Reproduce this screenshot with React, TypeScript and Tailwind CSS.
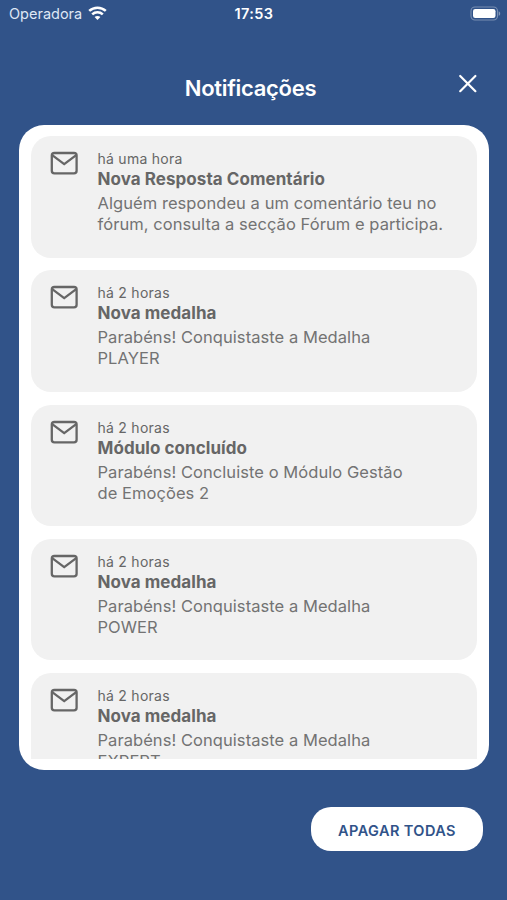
interface Notification {
  id: number;
  time: string;
  title: string;
  lines: string[];
}

const notifications: Notification[] = [
  {
    id: 1,
    time: 'há uma hora',
    title: 'Nova Resposta Comentário',
    lines: ['Alguém respondeu a um comentário teu no', 'fórum, consulta a secção Fórum e participa.'],
  },
  { id: 2, time: 'há 2 horas', title: 'Nova medalha', lines: ['Parabéns! Conquistaste a Medalha', 'PLAYER'] },
  { id: 3, time: 'há 2 horas', title: 'Módulo concluído', lines: ['Parabéns! Concluiste o Módulo Gestão', 'de Emoções 2'] },
  { id: 4, time: 'há 2 horas', title: 'Nova medalha', lines: ['Parabéns! Conquistaste a Medalha', 'POWER'] },
  { id: 5, time: 'há 2 horas', title: 'Nova medalha', lines: ['Parabéns! Conquistaste a Medalha', 'EXPERT'] },
];

function WifiIcon() {
  return (
    <svg className="w-[19px] h-[15px]" viewBox="0 0 19 15" fill="none" stroke="white" strokeWidth="2.6">
      <path d="M1.2 4.9C5.9 0.6 13.1 0.6 17.8 4.9" />
      <path d="M4.2 8.4C7.2 5.6 11.8 5.6 14.8 8.4" />
      <path d="M9.5 14L6.6 11.1C8.2 9.6 10.8 9.6 12.4 11.1Z" fill="white" stroke="none" />
    </svg>
  );
}

function BatteryIcon() {
  return (
    <svg className="w-[31px] h-[15px]" viewBox="0 0 31 15" fill="none">
      <rect x="1" y="1" width="26.5" height="13" rx="4" stroke="white" strokeOpacity="0.35" strokeWidth="1.1" />
      <rect x="3" y="3" width="22.5" height="9" rx="2.2" fill="white" />
      <path d="M28.7 5.2C30.7 6 30.7 9 28.7 9.8Z" fill="white" fillOpacity="0.4" />
    </svg>
  );
}

function CloseIcon() {
  return (
    <svg className="h-5 w-5" viewBox="0 0 20 20" fill="none" stroke="white" strokeWidth="2.2" strokeLinecap="round">
      <path d="M2.2 2L17.4 17.2M17.4 2L2.2 17.2" />
    </svg>
  );
}

function MailIcon() {
  return (
    <svg className="w-7 h-6" viewBox="0 0 28 24" fill="none" stroke="#666666" strokeWidth="2.3" strokeLinejoin="round">
      <rect x="1.8" y="2" width="24.8" height="20.3" rx="2.6" />
      <path d="M2.2 4.2L14.2 13.2L26.2 4.2" />
    </svg>
  );
}

function NotificationCard({ item }: { item: Notification }) {
  return (
    <div className="flex h-[121.5px] shrink-0 rounded-[20px] bg-[#f1f1f1] pl-[18.5px] pt-[15px]">
      <MailIcon />
      <div className="ml-5 whitespace-nowrap text-[#666666]">
        <p className="text-[14px] leading-[16px] tracking-[0.26px]">{item.time}</p>
        <p className="mt-px text-[17px] font-bold leading-[22px] tracking-[0.06px]">{item.title}</p>
        <div className="mt-[3px] text-[16.5px] leading-[21px] tracking-[0.06px] text-[#737373]">
          {item.lines.map((line) => (
            <p key={line}>{line}</p>
          ))}
        </div>
      </div>
    </div>
  );
}

export default function App() {
  return (
    <div className="flex h-[900px] w-[507px] flex-col overflow-hidden bg-[#315389] font-['Inter',sans-serif]">
      <div className="grid h-[27px] grid-cols-3 items-center pl-[9px] pr-[6px] text-white">
        <div className="flex items-center gap-[6px]">
          <span className="text-[14.5px] text-[#dfe7f5]">Operadora</span>
          <WifiIcon />
        </div>
        <span className="-ml-[2px] text-center text-[14.5px] font-semibold tracking-[0.4px]">17:53</span>
        <div className="flex justify-end">
          <BatteryIcon />
        </div>
      </div>

      <div className="grid h-[98px] grid-cols-[1fr_auto_1fr] pt-[42px] text-white">
        <h1 className="-ml-[6px] col-start-2 pt-[3px] text-[22px] font-semibold leading-8 tracking-[-0.3px]">Notificações</h1>
        <button className="mr-[29px] mt-[5px] h-5 w-5 justify-self-end">
          <CloseIcon />
        </button>
      </div>

      <div className="ml-[19px] h-[645px] w-[470px] rounded-[25px] bg-white px-3 pb-[11px] pt-[11px]">
        <div className="flex h-full flex-col gap-[12.8px] overflow-hidden">
          {notifications.map((item) => (
            <NotificationCard key={item.id} item={item} />
          ))}
        </div>
      </div>

      <button className="ml-[311px] mt-[37px] h-[44px] w-[172px] rounded-[20px] bg-white pt-[3px] text-[14.5px] font-semibold tracking-[0.42px] text-[#315389]">
        APAGAR TODAS
      </button>
    </div>
  );
}
